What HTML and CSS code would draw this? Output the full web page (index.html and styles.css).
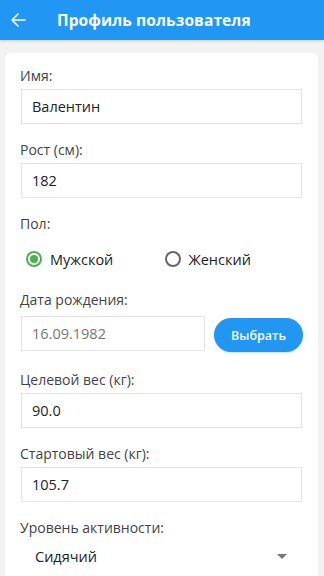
FILE: index.html
```html
<!DOCTYPE html>
<html lang="ru">
<head>
  <meta charset="UTF-8">
  <title>Профиль пользователя</title>
  <link rel="stylesheet" href="styles.css">
</head>
<body>

<!-- верхняя панель -->
<header class="toolbar">
  <svg class="toolbar-back" width="16" height="16" viewBox="0 0 16 16">
    <path d="M15 8H2M8 2L2 8l6 6" fill="none" stroke="#fff" stroke-width="1.6" stroke-linecap="round" stroke-linejoin="round"/>
  </svg>
  <h1 class="toolbar-title">Профиль пользователя</h1>
</header>

<main class="content">
  <div class="card">
    <div class="field">
      <label class="field-label">Имя:</label>
      <div class="input">Валентин</div>
    </div>

    <div class="field">
      <label class="field-label">Рост (см):</label>
      <div class="input">182</div>
    </div>

    <div class="field">
      <label class="field-label">Пол:</label>
      <div class="radio-group">
        <div class="radio checked"><span class="radio-dot"></span>Мужской</div>
        <div class="radio"><span class="radio-dot"></span>Женский</div>
      </div>
    </div>

    <div class="field field-date">
      <label class="field-label">Дата рождения:</label>
      <div class="date-row">
        <div class="input input-muted">16.09.1982</div>
        <button class="btn-pick">Выбрать</button>
      </div>
    </div>

    <div class="field">
      <label class="field-label">Целевой вес (кг):</label>
      <div class="input">90.0</div>
    </div>

    <div class="field">
      <label class="field-label">Стартовый вес (кг):</label>
      <div class="input">105.7</div>
    </div>

    <div class="field">
      <label class="field-label">Уровень активности:</label>
      <div class="spinner">
        <span>Сидячий</span>
        <span class="spinner-arrow"></span>
      </div>
    </div>
  </div>
</main>

</body>
</html>
```

FILE: styles.css
```css
/* === базовое === */
html, body {
  margin: 0;
  padding: 0;
  height: 100%;
  overflow: hidden;
}

body {
  background: #f2f2f2;
  font-family: "Open Sans", "Noto Sans", sans-serif;
  color: #222;
}

/* === верхняя панель === */
.toolbar {
  display: flex;
  align-items: center;
  height: 40px;
  background: #2196f3;
  padding: 0 0 0 10px;
  box-shadow: 0 1px 3px rgba(0, 0, 0, 0.15);
}

.toolbar-back {
  display: block;
}

.toolbar-title {
  margin: 0 0 0 31px;
  font-size: 15.5px;
  font-weight: 700;
  color: #fff;
  letter-spacing: 0.1px;
}

/* === карточка === */
.content {
  padding: 13px 6px 0 5px;
}

.card {
  background: #fff;
  border-radius: 6px;
  padding: 14px 15px 20px 15px;
}

.field {
  margin-bottom: 17px;
}

.field-label {
  display: block;
  font-size: 14px;
  color: #444;
  line-height: 18px;
  margin-bottom: 4px;
}

/* поле ввода */
.input {
  height: 33px;
  border: 1px solid #e4e4e4;
  box-sizing: content-box;
  display: flex;
  align-items: center;
  padding-left: 10px;
  font-size: 14.5px;
  color: #222;
  margin-left: 1px;
  margin-right: 1px;
}

.input-muted {
  color: #777;
}

/* радио */
.radio-group {
  display: flex;
  padding: 7px 0 0 6px;
  height: 30px;
  align-items: center;
}

.radio {
  display: flex;
  align-items: center;
  font-size: 14.5px;
  color: #222;
  width: 142px;
}

.radio-dot {
  width: 12px;
  height: 12px;
  border: 2px solid #666;
  border-radius: 50%;
  margin-right: 8px;
  position: relative;
}

.radio.checked .radio-dot {
  border-color: #4caf50;
}

.radio.checked .radio-dot::after {
  content: "";
  position: absolute;
  left: 2px;
  top: 2px;
  width: 8px;
  height: 8px;
  border-radius: 50%;
  background: #4caf50;
}

/* дата */
.field-date {
  margin-bottom: 19px;
}

.date-row {
  display: flex;
  align-items: flex-start;
}

.date-row .input {
  flex: 1;
  margin-top: 3px;
  margin-right: 9px;
}

.btn-pick {
  width: 89px;
  height: 34px;
  border: none;
  border-radius: 17px;
  background: #2196f3;
  color: #fff;
  font-family: inherit;
  font-size: 12.5px;
  font-weight: 600;
  margin-top: 5px;
  margin-right: 0;
  box-shadow: 0 1px 2px rgba(0, 0, 0, 0.15);
}

/* выпадающий список */
.spinner {
  display: flex;
  align-items: center;
  justify-content: space-between;
  height: 30px;
  padding: 0 16px 0 15px;
  font-size: 14.5px;
  color: #222;
}

.spinner-arrow {
  width: 0;
  height: 0;
  border-left: 5px solid transparent;
  border-right: 5px solid transparent;
  border-top: 5px solid #777;
}
```
